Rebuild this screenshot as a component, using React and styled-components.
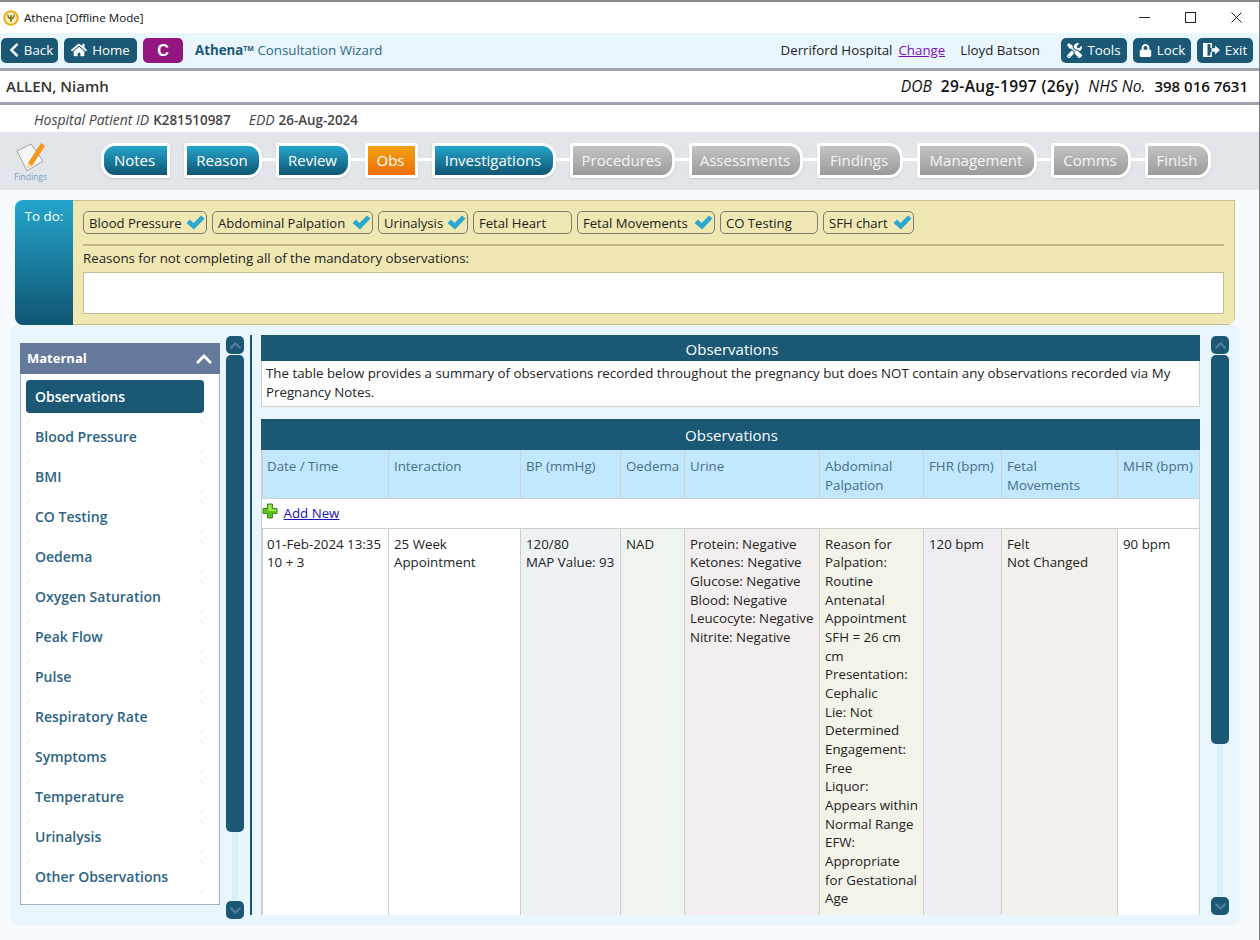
import styled, { createGlobalStyle, css } from "styled-components";
import {
  FaChevronLeft,
  FaChevronUp,
  FaChevronDown,
  FaHome,
  FaTools,
  FaLock,
} from "react-icons/fa";

const FONT = '"Open Sans", "Noto Sans", "Liberation Sans", sans-serif';
const NAVY = "#1a5876";

const steps = [
  { label: "Notes", width: 69, left: 14, right: 3 },
  { label: "Reason", width: 78, left: 3, right: 14 },
  { label: "Review", width: 75, left: 3, right: 14 },
  { label: "Obs", width: 53, left: 3, right: 3, tone: "orange" },
  { label: "Investigations", width: 124, left: 3, right: 14 },
  { label: "Procedures", width: 105, left: 3, right: 14, tone: "grey" },
  { label: "Assessments", width: 114, left: 3, right: 14, tone: "grey" },
  { label: "Findings", width: 86, left: 3, right: 14, tone: "grey" },
  { label: "Management", width: 120, left: 3, right: 14, tone: "grey" },
  { label: "Comms", width: 80, left: 3, right: 14, tone: "grey" },
  { label: "Finish", width: 66, left: 3, right: 14, tone: "grey" },
];

const todos = [
  { label: "Blood Pressure", width: 124, done: true },
  { label: "Abdominal Palpation", width: 161, done: true },
  { label: "Urinalysis", width: 90, done: true },
  { label: "Fetal Heart", width: 99 },
  { label: "Fetal Movements", width: 138, done: true },
  { label: "CO Testing", width: 98 },
  { label: "SFH chart", width: 91, done: true },
];

const navItems = [
  "Observations",
  "Blood Pressure",
  "BMI",
  "CO Testing",
  "Oedema",
  "Oxygen Saturation",
  "Peak Flow",
  "Pulse",
  "Respiratory Rate",
  "Symptoms",
  "Temperature",
  "Urinalysis",
  "Other Observations",
];

const columns = [
  { label: "Date / Time", width: 126 },
  { label: "Interaction", width: 132 },
  { label: "BP (mmHg)", width: 100, tint: "#edf2f5" },
  { label: "Oedema", width: 64, tint: "#eef5ee" },
  { label: "Urine", width: 135, tint: "#f5eeee" },
  { label: "Abdominal Palpation", width: 104, tint: "#f3f3ea" },
  { label: "FHR (bpm)", width: 78, tint: "#efecf3" },
  { label: "Fetal\nMovements", width: 116, tint: "#f4f0ec" },
  { label: "MHR (bpm)", width: 82 },
];

const rowValues = [
  ["01-Feb-2024 13:35", "10 + 3"],
  ["25 Week Appointment"],
  ["120/80", "MAP Value: 93"],
  ["NAD"],
  [
    "Protein: Negative",
    "Ketones: Negative",
    "Glucose: Negative",
    "Blood: Negative",
    "Leucocyte: Negative",
    "Nitrite: Negative",
  ],
  [
    "Reason for Palpation: Routine Antenatal Appointment",
    "SFH = 26 cm cm",
    "Presentation: Cephalic",
    "Lie: Not Determined",
    "Engagement: Free",
    "Liquor: Appears within Normal Range",
    "EFW: Appropriate for Gestational Age",
  ],
  ["120 bpm"],
  ["Felt", "Not Changed"],
  ["90 bpm"],
];

const Tick = () => (
  <svg width="19" height="15" viewBox="0 0 19 15">
    <path d="M0.5 8 L4 4.5 L7.5 8 L15 0.5 L18.5 3.5 L8 14.5 Z" fill="#2aa8d0" />
  </svg>
);

const ExitIcon = () => (
  <svg width="17" height="16" viewBox="0 0 17 16" fill="#fff">
    <path d="M0 1 H9 V6 H7.5 V2.6 L4.5 1.8 V14 L7.5 13.2 V10 H9 V15 H0 Z" />
    <path d="M8.5 6.3 H12 V3.4 L17 8 L12 12.6 V9.7 H8.5 Z" />
  </svg>
);

const PlusIcon = () => (
  <svg width="16" height="16" viewBox="0 0 16 16">
    <path
      d="M5.5 1 H10.5 V5.5 H15 V10.5 H10.5 V15 H5.5 V10.5 H1 V5.5 H5.5 Z"
      fill="#5fc41f"
      stroke="#3c8a14"
      strokeWidth="1"
      strokeLinejoin="round"
    />
    <path d="M6.5 2 H9.5 V6.5 H14 V8 H6.5 Z" fill="#a6ea5e" />
  </svg>
);

const AppLogo = () => (
  <svg width="16" height="16" viewBox="0 0 16 16" fill="none">
    <circle cx="8" cy="8" r="6.7" fill="#fdf3d0" stroke="#e8ae18" strokeWidth="2" />
    <path
      d="M4.8 4.6 C5 7.4 6.4 8.6 8 8.8 C9.6 8.6 11 7.4 11.2 4.6 M8 5 V12"
      stroke="#8c6d14"
      strokeWidth="1.5"
    />
  </svg>
);

const FindingsIcon = () => (
  <svg width="34" height="32" viewBox="0 0 34 32">
    <path
      d="M3 10 L17 3 L29 20 L13 30 Z"
      fill="#f6f6f6"
      stroke="#8b8b8b"
      strokeWidth="0.8"
    />
    <path d="M14 22 L27 2 L31 5 L18 25 L13 27 Z" fill="#f09a1c" />
    <path d="M14 22 L18 25 L13 27 Z" fill="#f6e0b0" />
  </svg>
);

const ScrollBar = ({ thumb, tall }) => (
  <Scroll $tall={tall}>
    <ScrollButton>
      <FaChevronUp />
    </ScrollButton>
    <ScrollTrack>
      <ScrollThumb style={{ height: thumb }} />
    </ScrollTrack>
    <ScrollButton>
      <FaChevronDown />
    </ScrollButton>
  </Scroll>
);

const App = () => {
  return (
    <Page>
      <GlobalStyle />
      <TitleBar>
        <AppLogo />
        <TitleText>Athena [Offline Mode]</TitleText>
        <WindowControls>
          <WindowButton>
            <svg width="11" height="11" viewBox="0 0 11 11">
              <path d="M0 5.5 H11" stroke="#222" />
            </svg>
          </WindowButton>
          <WindowButton>
            <svg width="11" height="11" viewBox="0 0 11 11">
              <rect x="0.5" y="0.5" width="10" height="10" fill="none" stroke="#222" />
            </svg>
          </WindowButton>
          <WindowButton>
            <svg width="11" height="11" viewBox="0 0 11 11">
              <path d="M0.5 0.5 L10.5 10.5 M10.5 0.5 L0.5 10.5" stroke="#222" />
            </svg>
          </WindowButton>
        </WindowControls>
      </TitleBar>

      <Toolbar>
        <ToolButton $width={57} $gap={2}>
          <FaChevronLeft size={16} />
          Back
        </ToolButton>
        <ToolButton $width={73}>
          <FaHome size={16} />
          Home
        </ToolButton>
        <ConsultBadge>C</ConsultBadge>
        <WizardTitle>
          <strong>
            Athena<sup>TM</sup>
          </strong>{" "}
          Consultation Wizard
        </WizardTitle>
        <ToolbarRight>
          <span>Derriford Hospital</span>
          <ChangeLink href="#">Change</ChangeLink>
          <UserName>Lloyd Batson</UserName>
          <ToolButton $width={66}>
            <FaTools size={15} />
            Tools
          </ToolButton>
          <ToolButton $width={58}>
            <FaLock size={13} />
            Lock
          </ToolButton>
          <ToolButton $width={56}>
            <ExitIcon />
            Exit
          </ToolButton>
        </ToolbarRight>
      </Toolbar>

      <PatientBar>
        <PatientName>ALLEN, Niamh</PatientName>
        <PatientIds>
          <em>DOB</em>
          <DobValue>29-Aug-1997 (26y)</DobValue>
          <em>NHS No.</em>
          <b>398 016 7631</b>
        </PatientIds>
      </PatientBar>

      <SubBar>
        <em>Hospital Patient ID</em>
        <b>K281510987</b>
        <em>EDD</em>
        <b>26-Aug-2024</b>
      </SubBar>

      <WizardBar>
        <FindingsTile>
          <FindingsIcon />
          <span>Findings</span>
        </FindingsTile>
        <Steps>
          {steps.map((step) => (
            <Step
              key={step.label}
              $width={step.width}
              $left={step.left}
              $right={step.right}
              $tone={step.tone}
            >
              {step.label}
            </Step>
          ))}
        </Steps>
      </WizardBar>

      <Todo>
        <TodoLabel>To do:</TodoLabel>
        <TodoBody>
          <Chips>
            {todos.map((todo) => (
              <Chip key={todo.label} $width={todo.width}>
                {todo.label}
                {todo.done && <Tick />}
              </Chip>
            ))}
          </Chips>
          <TodoRule />
          <ReasonLabel>
            Reasons for not completing all of the mandatory observations:
          </ReasonLabel>
          <ReasonBox />
        </TodoBody>
      </Todo>

      <MainPanel>
        <SideColumn>
          <NavPanel>
            <NavHeader>
              <span>Maternal</span>
              <FaChevronUp size={18} />
            </NavHeader>
            <NavList>
              {navItems.map((item, i) => (
                <NavItem key={item} $active={i === 0}>
                  {item}
                </NavItem>
              ))}
            </NavList>
          </NavPanel>
          <NextPanel />
        </SideColumn>
        <ScrollBar thumb={477} tall />
        <Divider />
        <Content>
          <InfoBox>
            <BoxTitle>Observations</BoxTitle>
            <InfoText>
              The table below provides a summary of observations recorded
              throughout the pregnancy but does NOT contain any observations
              recorded via My Pregnancy Notes.
            </InfoText>
          </InfoBox>
          <TableBox>
            <TableTitle>Observations</TableTitle>
            <Table>
              <colgroup>
                {columns.map((col) => (
                  <col key={col.label} width={col.width} />
                ))}
              </colgroup>
              <thead>
                <tr>
                  {columns.map((col) => (
                    <HeadCell key={col.label}>{col.label}</HeadCell>
                  ))}
                </tr>
              </thead>
              <tbody>
                <tr>
                  <AddCell colSpan={columns.length}>
                    <PlusIcon />
                    <AddLink href="#">Add New</AddLink>
                  </AddCell>
                </tr>
                <tr>
                  {rowValues.map((lines, i) => (
                    <BodyCell key={columns[i].label} $tint={columns[i].tint}>
                      {lines.map((line) => (
                        <div key={line}>{line}</div>
                      ))}
                    </BodyCell>
                  ))}
                </tr>
              </tbody>
            </Table>
          </TableBox>
        </Content>
        <ScrollBar thumb={389} />
      </MainPanel>
    </Page>
  );
};

const GlobalStyle = createGlobalStyle`
  html, body {
    margin: 0;
    padding: 0;
    background: #f7fbfd;
  }
  * {
    box-sizing: border-box;
  }
`;

const Page = styled.div`
  width: 1260px;
  height: 940px;
  overflow: hidden;
  background: #f7fbfd;
  border-top: 2px solid #8c8c8c;
  border-right: 1px solid #7a7a7a;
  font-family: ${FONT};
  font-size: 13.3px;
  color: #222;
`;

const TitleBar = styled.div`
  height: 31px;
  display: flex;
  align-items: center;
  padding-left: 3px;
  background: #fff;
`;

const TitleText = styled.span`
  margin-left: 5px;
  font-size: 11.6px;
  color: #111;
`;

const WindowControls = styled.div`
  margin-left: auto;
  display: flex;
`;

const WindowButton = styled.div`
  width: 46px;
  height: 30px;
  display: flex;
  align-items: center;
  justify-content: center;
`;

const Toolbar = styled.div`
  height: 35px;
  display: flex;
  align-items: center;
  padding: 0 6px 0 1px;
  gap: 6px;
  background: #e9f6fe;
  line-height: 18px;
`;

const ToolButton = styled.button`
  width: ${(p) => p.$width}px;
  height: 25px;
  padding: 0 0 1px;
  display: flex;
  align-items: center;
  justify-content: center;
  gap: ${(p) => p.$gap ?? 5}px;
  border: 0;
  border-radius: 5px;
  background: ${NAVY};
  color: #fff;
  font-family: ${FONT};
  font-size: 13.3px;
`;

const ConsultBadge = styled.div`
  width: 40px;
  height: 25px;
  border-radius: 5px;
  background: #93167f;
  color: #fff;
  font-family: "Liberation Sans", sans-serif;
  font-weight: 700;
  font-size: 16px;
  display: flex;
  align-items: center;
  justify-content: center;
`;

const WizardTitle = styled.div`
  margin: 0 0 2px 6px;
  color: #2d6a88;

  strong {
    color: ${NAVY};
  }
  sup {
    font-size: 7px;
    vertical-align: 4px;
    line-height: 0;
  }
`;

const ToolbarRight = styled.div`
  margin-left: auto;
  display: flex;
  align-items: center;
  gap: 6px;
  color: #222;

  > span,
  > a {
    margin-bottom: 2px;
  }
`;

const ChangeLink = styled.a`
  color: #7a0ec0;
`;

const UserName = styled.span`
  margin: 0 15px 0 9px;
`;

const PatientBar = styled.div`
  height: 37px;
  display: flex;
  align-items: center;
  justify-content: space-between;
  padding: 0 11px 2px 6px;
  background: #fff;
  border-top: 3px solid #9ea5b0;
  border-bottom: 3px solid #9ea5b0;
`;

const PatientName = styled.div`
  font-size: 15px;
  font-weight: 600;
  color: #333;
`;

const PatientIds = styled.div`
  display: flex;
  align-items: baseline;
  gap: 9px;
  font-size: 15px;
  color: #111;

  em {
    font-size: 15.6px;
  }
  b {
    font-weight: 600;
  }
`;

const DobValue = styled.b`
  font-size: 15.5px;
  letter-spacing: 0.4px;
`;

const SubBar = styled.div`
  height: 27px;
  display: flex;
  align-items: baseline;
  gap: 4px;
  padding: 5px 0 0 34px;
  background: #fff;
  color: #444;
  font-size: 14px;

  b {
    font-size: 13.4px;
    font-weight: 600;
    margin-right: 14px;
  }
`;

const WizardBar = styled.div`
  height: 58px;
  display: flex;
  align-items: center;
  background: #e2e5ea;
`;

const FindingsTile = styled.div`
  width: 101px;
  padding-left: 14px;
  display: flex;
  flex-direction: column;
  align-items: flex-start;
  color: #7c9ecb;
  font-size: 8.5px;

  span {
    margin-top: -1px;
    line-height: 10px;
  }
`;

const Steps = styled.div`
  display: flex;
  gap: 14px;
  margin-top: -2px;
`;

const stepTones = {
  blue: css`
    background: linear-gradient(#25a5cc, #0f5572);
    color: #fff;
  `,
  orange: css`
    background: linear-gradient(#f0a312, #f26d05);
    color: #fff;
  `,
  grey: css`
    background: linear-gradient(#c4c4c4, #9a9a9a);
    color: #f4f4f4;
  `,
};

const Step = styled.div`
  position: relative;
  width: ${(p) => p.$width}px;
  height: 35px;
  padding-right: 2px;
  display: flex;
  align-items: center;
  justify-content: center;
  font-size: 15px;
  white-space: nowrap;
  border: 3px solid #fff;
  border-radius: ${(p) =>
    `${p.$left}px ${p.$right}px ${p.$right}px ${p.$left}px`};
  background-clip: padding-box;
  box-shadow: 0 1px 2px rgba(0, 0, 0, 0.12);
  ${(p) => stepTones[p.$tone || "blue"]}

  &:nth-child(n + 3)::before {
    content: "";
    position: absolute;
    left: -17px;
    top: 12px;
    width: 14px;
    height: 3px;
    background: #fff;
  }
`;

const Todo = styled.div`
  display: flex;
  height: 125px;
  margin: 10px 24px 0 15px;
  border-radius: 8px 0 8px 8px;
  overflow: hidden;
`;

const TodoLabel = styled.div`
  width: 58px;
  padding-top: 7px;
  text-align: center;
  color: #fff;
  background: linear-gradient(#25a5cc, #0f5572);
`;

const TodoBody = styled.div`
  flex: 1;
  padding: 10px;
  background: #f0e8b2;
  border: 1px solid #c9bf8e;
  border-left: 0;
`;

const Chips = styled.div`
  display: flex;
  gap: 5px;
`;

const Chip = styled.div`
  width: ${(p) => p.$width}px;
  height: 23px;
  display: flex;
  align-items: center;
  justify-content: space-between;
  padding: 0 1px 0 5px;
  border: 1px solid #7c7c70;
  border-radius: 5px;
  font-size: 13.1px;
  white-space: nowrap;
  color: #222;
`;

const TodoRule = styled.div`
  height: 2px;
  margin-top: 10px;
  background: #c1b88b;
`;

const ReasonLabel = styled.div`
  margin-top: 3px;
  line-height: 18px;
`;

const ReasonBox = styled.div`
  height: 42px;
  margin-top: 5px;
  background: #fff;
  border: 1px solid #c4bb8f;
`;

const MainPanel = styled.div`
  height: 600px;
  margin: 0 19px 0 10px;
  padding: 10px 10px 0 10px;
  display: flex;
  background: #e9f6fe;
  border-radius: 8px;
`;

const SideColumn = styled.div`
  width: 200px;
  height: 584px;
  padding-top: 8px;
  overflow: hidden;
  flex: none;
`;

const NavPanel = styled.div`
  border: 1px solid #a3b2c6;
  border-top: 0;
  background: #fff;
  height: 562px;
`;

const NextPanel = styled.div`
  margin-top: 14px;
  border-top: 1px solid #a3b2c6;
`;

const NavHeader = styled.div`
  height: 31px;
  margin: 0 -1px;
  padding: 0 7px;
  display: flex;
  align-items: center;
  justify-content: space-between;
  background: #65799a;
  color: #fff;
  font-weight: 700;
  font-size: 13px;

  span {
    margin-bottom: 2px;
  }
`;

const NavList = styled.div`
  padding: 6px 15px 0 5px;
  display: flex;
  flex-direction: column;
  gap: 7px;
`;

const NavItem = styled.div`
  position: relative;
  height: 33px;
  padding-left: 9px;
  display: flex;
  align-items: center;
  border-radius: 4px;
  font-weight: 600;
  font-size: 14px;
  color: ${(p) => (p.$active ? "#fff" : "#2c6483")};
  background: ${(p) => (p.$active ? NAVY : "transparent")};

  &::before {
    content: "";
    position: absolute;
    inset: 0;
    border: 1px solid ${(p) => (p.$active ? NAVY : "#cfe9f6")};
    border-radius: 4px;
    mask:
      linear-gradient(#000 0 0) 0 0 / 4px 4px no-repeat,
      linear-gradient(#000 0 0) 100% 0 / 4px 4px no-repeat,
      linear-gradient(#000 0 0) 0 100% / 4px 4px no-repeat,
      linear-gradient(#000 0 0) 100% 100% / 4px 4px no-repeat;
  }
`;

const Scroll = styled.div`
  flex: none;
  width: 18px;
  height: ${(p) => (p.$tall ? 583 : 579)}px;
  margin: 1px 0 0 ${(p) => (p.$tall ? 6 : 11)}px;
  display: flex;
  flex-direction: column;
`;

const ScrollButton = styled.div`
  flex: none;
  height: 18px;
  display: flex;
  align-items: center;
  justify-content: center;
  border-radius: 5px;
  background: ${NAVY};
  color: #56819c;
  font-size: 13px;
`;

const ScrollTrack = styled.div`
  flex: 1;
  margin: 1px 0;
  display: flex;
  flex-direction: column;
  align-items: center;
  background: linear-gradient(#d7effb, #d7effb) center / 6px 100% no-repeat;
`;

const ScrollThumb = styled.div`
  width: 18px;
  background: ${NAVY};
  border-radius: 5px;
`;

const Divider = styled.div`
  flex: none;
  width: 2px;
  height: 580px;
  margin: 0 9px 0 6px;
  background: ${NAVY};
`;

const Content = styled.div`
  flex: none;
  width: 939px;
  height: 580px;
  overflow: hidden;
  line-height: 18.67px;
`;

const InfoBox = styled.div`
  background: #fff;
  border: 1px solid #cfcfcf;
  border-top: 0;
  height: 72px;
`;

const BoxTitle = styled.div`
  height: 26px;
  margin: 0 -1px;
  padding: 3px 0 0 3px;
  display: flex;
  align-items: center;
  justify-content: center;
  background: ${NAVY};
  color: #fff;
  font-size: 15px;
`;

const InfoText = styled.div`
  padding: 3px 4px;
`;

const TableBox = styled.div`
  margin-top: 12px;
  background: #fff;
  border: 1px solid #cfcfcf;
  border-top: 0;
`;

const TableTitle = styled(BoxTitle)`
  height: 31px;
  padding: 1px 0 0 2px;
`;

const Table = styled.table`
  width: 100%;
  table-layout: fixed;
  border-collapse: collapse;
`;

const HeadCell = styled.th`
  height: 48px;
  padding: 7px 5px 0;
  vertical-align: top;
  text-align: left;
  font-weight: 400;
  white-space: pre-line;
  color: #45708a;
  background: #c2e8fd;
  border: 1px solid #cfcfcf;
  border-top: 0;

  &:first-child {
    padding-left: 4px;
  }
`;

const AddCell = styled.td`
  height: 30px;
  padding: 0;
  border-bottom: 1px solid #cfcfcf;

  svg {
    margin-left: -1px;
    vertical-align: -1px;
  }
`;

const AddLink = styled.a`
  margin-left: 6px;
  color: #1a12b8;
`;

const BodyCell = styled.td`
  height: 460px;
  padding: 6px 4px 0 5px;
  vertical-align: top;
  color: #222;
  background: ${(p) => p.$tint || "#fff"};
  border: 1px solid #cfcfcf;

  &:first-child {
    padding-left: 4px;
  }
`;

export default App;
